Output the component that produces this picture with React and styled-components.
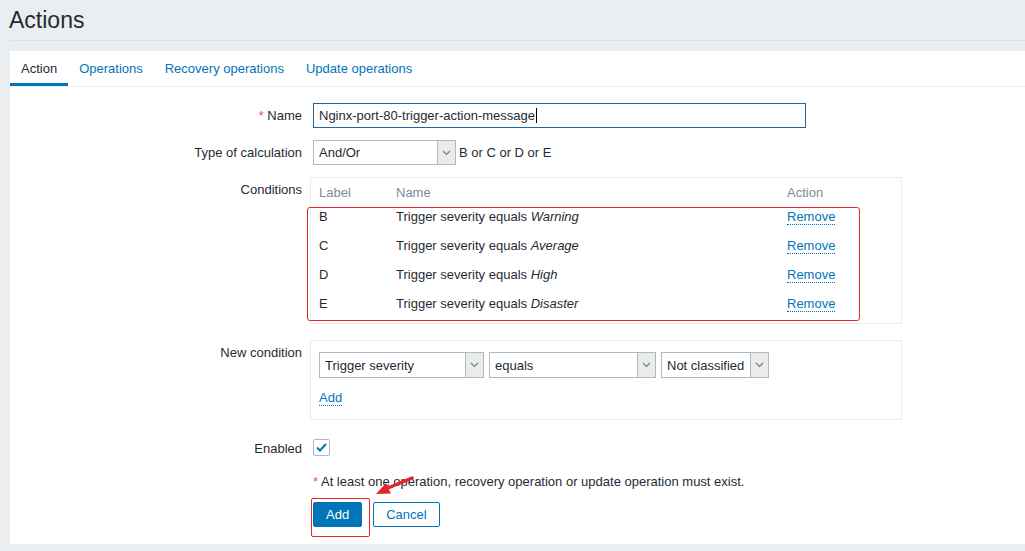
import React from 'react';
import styled, { createGlobalStyle } from 'styled-components';

const Global = createGlobalStyle`
  html, body { margin: 0; padding: 0; background: #ebeef1; }
  body {
    font-family: "Liberation Sans", Arial, sans-serif;
    font-size: 13px;
    color: #1f2c33;
  }
  * { box-sizing: border-box; }
`;

const Page = styled.div`
  min-height: 551px;
  display: flex;
  flex-direction: column;
`;

const Header = styled.header`
  margin-left: 9px;
  height: 41px;
  border-bottom: 1px solid #dde2e6;
  display: flex;
  align-items: center;
`;

const Title = styled.h1`
  margin: 0;
  font-size: 23px;
  font-weight: normal;
  line-height: 24px;
  color: #1f2c33;
`;

const Panel = styled.main`
  margin: 10px 0 0 10px;
  background: #fff;
  padding-bottom: 17px;
`;

const TabList = styled.nav`
  display: flex;
  height: 36px;
  border-bottom: 1px solid #ebeef1;
`;

const Tab = styled.div`
  display: flex;
  align-items: center;
  padding: 3px 11px 0;
  line-height: 15px;
  border-bottom: 3px solid ${p => (p.$active ? '#0275b8' : 'transparent')};
  color: ${p => (p.$active ? '#1f2c33' : '#0275b8')};
`;

const Form = styled.div`
  padding-top: 16px;
  display: flex;
  flex-direction: column;
`;

const Row = styled.div`
  display: grid;
  grid-template-columns: 292px 1fr;
  column-gap: 11px;
  align-items: ${p => p.$align || 'start'};
  margin-top: ${p => p.$mt || 0}px;
`;

const Label = styled.div`
  text-align: right;
  line-height: 15px;
  padding-top: ${p => (p.$pt === undefined ? 5 : p.$pt)}px;
`;

const Req = styled.span`
  color: #e45959;
`;

const Field = styled.div`
  display: flex;
  align-items: center;
  position: relative;
`;

const TextInput = styled.div`
  width: 493px;
  height: 25px;
  border: 1px solid #1f65a3;
  padding: 0 5px;
  display: flex;
  align-items: center;
  background: #fff;
  line-height: 15px;
`;

const Caret = styled.span`
  display: inline-block;
  width: 1px;
  height: 15px;
  background: #000;
  margin-left: 1px;
`;

const SelectBox = styled.div`
  width: ${p => p.$w}px;
  height: ${p => p.$h || 25}px;
  border: 1px solid #acbbc2;
  background: #fff;
  display: flex;
  align-items: stretch;
`;

const SelectText = styled.div`
  flex: 1;
  padding-left: 5px;
  display: flex;
  align-items: center;
  line-height: 15px;
  white-space: nowrap;
  overflow: hidden;
`;

const SelectArrow = styled.div`
  width: 18px;
  border-left: 1px solid #acbbc2;
  background: #ebebeb;
  display: flex;
  align-items: center;
  justify-content: center;
`;

const Hint = styled.span`
  margin-left: 3px;
  line-height: 15px;
`;

const Box = styled.div`
  position: relative;
  margin-left: -3px;
  width: 592px;
  border: 1px solid #ebeef1;
  padding: ${p => p.$pad};
`;

const CondTable = styled.div`
  display: grid;
  grid-template-columns: 77px 391px 1fr;
  grid-auto-rows: 29px;
  grid-template-rows: 19px;
  align-items: center;
  line-height: 15px;
`;

const Th = styled.div`
  color: #768d99;
`;

const Td = styled.div``;

const Link = styled.span`
  color: #0275b8;
  border-bottom: 1px dotted #0275b8;
  line-height: 14px;
  display: inline-block;
`;

const Annot = styled.div`
  position: absolute;
  left: -4px;
  top: 29px;
  width: 553px;
  height: 114px;
  border: 1px solid #e5252a;
  border-radius: 3px;
  pointer-events: none;
`;

const SelectRow = styled.div`
  display: flex;
  gap: 5px;
`;

const AddRow = styled.div`
  margin-top: 12px;
  line-height: 15px;
`;

const Checkbox = styled.div`
  width: 17px;
  height: 17px;
  border: 1px solid #acbbc2;
  border-radius: 2px;
  display: flex;
  align-items: center;
  justify-content: center;
  background: #fff;
`;

const Footer = styled.div`
  grid-column: 2;
  position: relative;
  margin-top: 18px;
  display: flex;
  flex-direction: column;
`;

const Note = styled.div`
  line-height: 15px;
`;

const Buttons = styled.div`
  display: flex;
  gap: 11px;
  margin-top: 13px;
  position: relative;
`;

const Button = styled.button`
  height: 25px;
  padding: 0 12px;
  font-family: inherit;
  font-size: 13px;
  border-radius: 2px;
  border: 1px solid #0275b8;
  background: ${p => (p.$primary ? '#0275b8' : '#fff')};
  color: ${p => (p.$primary ? '#fff' : '#0275b8')};
`;

const AddFrame = styled.span`
  position: absolute;
  z-index: 2;
  left: -2px;
  top: -4px;
  width: 59px;
  height: 39px;
  border: 1px solid rgb(229, 37, 42);
  border-radius: 2px;
  background: transparent;
  pointer-events: none;
`;

const ArrowMark = styled.svg`
  position: absolute;
  left: 60px;
  top: 0;
  overflow: visible;
`;

const Bottom = styled.div`
  height: 7px;
`;

const Chevron = () => (
  <svg width="9" height="6" viewBox="0 0 9 6">
    <path d="M1 1 L4.5 4.5 L8 1" fill="none" stroke="#6b7d87" strokeWidth="1.1" />
  </svg>
);

const Select = ({ w, h, children }) => (
  <SelectBox $w={w} $h={h}>
    <SelectText>{children}</SelectText>
    <SelectArrow>
      <Chevron />
    </SelectArrow>
  </SelectBox>
);

const conditions = [
  ['B', 'Warning'],
  ['C', 'Average'],
  ['D', 'High'],
  ['E', 'Disaster'],
];

export default function App() {
  return (
    <Page>
      <Global />
      <Header>
        <Title>Actions</Title>
      </Header>
      <Panel>
        <TabList>
          <Tab $active>Action</Tab>
          <Tab>Operations</Tab>
          <Tab>Recovery operations</Tab>
          <Tab>Update operations</Tab>
        </TabList>
        <Form>
          <Row>
            <Label>
              <Req>*</Req> Name
            </Label>
            <Field>
              <TextInput>
                Nginx-port-80-trigger-action-message
                <Caret />
              </TextInput>
            </Field>
          </Row>
          <Row $mt={12}>
            <Label>Type of calculation</Label>
            <Field>
              <Select w={143}>And/Or</Select>
              <Hint>B or C or D or E</Hint>
            </Field>
          </Row>
          <Row $mt={12}>
            <Label>Conditions</Label>
            <Field>
              <Box $pad="5px 8px">
                <CondTable>
                  <Th>Label</Th>
                  <Th>Name</Th>
                  <Th>Action</Th>
                  {conditions.map(([l, sev]) => (
                    <React.Fragment key={l}>
                      <Td>{l}</Td>
                      <Td>
                        Trigger severity equals <em>{sev}</em>
                      </Td>
                      <Td>
                        <Link>Remove</Link>
                      </Td>
                    </React.Fragment>
                  ))}
                </CondTable>
                <Annot />
              </Box>
            </Field>
          </Row>
          <Row $mt={16}>
            <Label>New condition</Label>
            <Field>
              <Box $pad="11px 8px 13px">
                <SelectRow>
                  <Select w={165} h={26}>Trigger severity</Select>
                  <Select w={167} h={26}>equals</Select>
                  <Select w={108} h={26}>Not classified</Select>
                </SelectRow>
                <AddRow>
                  <Link>Add</Link>
                </AddRow>
              </Box>
            </Field>
          </Row>
          <Row $mt={19} $align="center">
            <Label $pt={1}>Enabled</Label>
            <Field>
              <Checkbox>
                <svg width="11" height="9" viewBox="0 0 11 9">
                  <path d="M1 4.5 L4 7.5 L10 1" fill="none" stroke="#0275b8" strokeWidth="2" />
                </svg>
              </Checkbox>
            </Field>
          </Row>
          <Row>
            <Footer>
              <Note>
                <Req>*</Req> At least one operation, recovery operation or update operation must exist.
              </Note>
              <Buttons>
                <Button $primary>Add</Button>
                <Button>Cancel</Button>
                <AddFrame />
              </Buttons>
              <ArrowMark width="45" height="24" viewBox="0 0 45 24">
                <path d="M15 14 L39 4" stroke="#e5252a" strokeWidth="3.5" strokeLinecap="round" />
                <polygon points="3,20 18,19.5 13,9" fill="#e5252a" />
              </ArrowMark>
            </Footer>
          </Row>
        </Form>
      </Panel>
      <Bottom />
    </Page>
  );
}
